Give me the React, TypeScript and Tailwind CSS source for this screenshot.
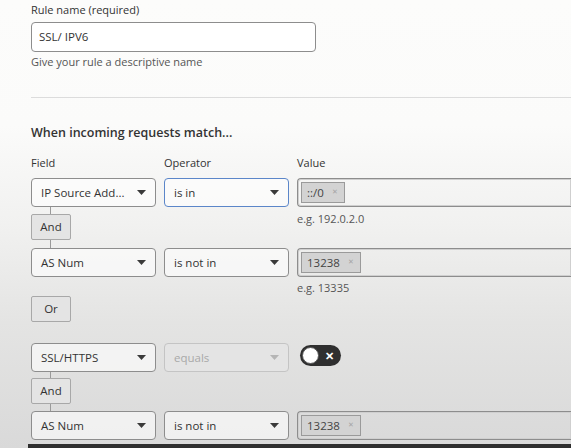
import React from "react";

const font = { fontFamily: '"Open Sans", "Noto Sans", Arial, sans-serif' };

function Caret({ muted }: { muted?: boolean }) {
  return (
    <svg width="9" height="5" viewBox="0 0 9 5" className="shrink-0">
      <path d="M0 0h9L4.5 5z" fill={muted ? "#b5b5b5" : "#3a3a3a"} />
    </svg>
  );
}

function Select({ label, focused, disabled }: { label: string; focused?: boolean; disabled?: boolean }) {
  const border = focused ? "border-[#5b86c9]" : disabled ? "border-[#c4c4c4]" : "border-[#8d8d8d]";
  const bg = disabled ? "bg-[#e4e4e4]" : "bg-white/60";
  const text = disabled ? "text-[#a9a9a9]" : "text-[#333]";
  return (
    <div className={`flex h-[29px] items-center justify-between rounded-[4px] border pl-[9px] pr-[9px] text-[11.5px] ${border} ${bg} ${text}`}>
      <span>{label}</span>
      <Caret muted={disabled} />
    </div>
  );
}

function Tag({ label }: { label: string }) {
  return (
    <span className="flex h-[21px] items-center gap-[8px] border border-[#9a9a9a] bg-[#d3d3d3] pl-[5px] pr-[6px] text-[11.5px] text-[#444]">
      {label}
      <span className="text-[7px] text-[#a5a5a5]">✕</span>
    </span>
  );
}

function Value({ tag }: { tag: string }) {
  return (
    <div className="flex h-[29px] items-center rounded-l-[4px] border border-r-0 border-[#8d8d8d] pl-[3px] shadow-[inset_0_0_0_1px_#cfcfcf]">
      <Tag label={tag} />
    </div>
  );
}

function Joiner({ label }: { label: string }) {
  return (
    <div className="flex h-[26px] w-[40px] items-center justify-center rounded-[2px] border border-[#a8a8a8] bg-[#e4e4e4] text-[11.5px] text-[#333]">
      {label}
    </div>
  );
}

function Link({ h }: { h: string }) {
  return <div className={`ml-[19px] w-px bg-[#9a9a9a] ${h}`} />;
}

function Toggle() {
  return (
    <div className="ml-[3px] mt-[2px] flex h-[21px] w-[41px] items-center justify-between rounded-full bg-[#2f2f2f] px-[2px]">
      <span className="h-[17px] w-[17px] rounded-full border border-[#555] bg-white" />
      <span className="pr-[5px] text-[11px] leading-none font-bold text-white">✕</span>
    </div>
  );
}

const grid = "grid grid-cols-[125px_125px_1fr] gap-x-[8px]";

export default function App() {
  return (
    <div
      style={font}
      className="relative flex h-[448px] w-[571px] flex-col overflow-hidden bg-[linear-gradient(180deg,#fcfcfb_0%,#fbfbfa_28%,#f1f1f0_50%,#e4e4e3_72%,#d9d9d9_100%)]"
    >
      <div className="flex flex-1 flex-col pl-[31px] pt-[2px]">
        <p className="text-[11px] leading-[16px] text-[#333]">Rule name (required)</p>
        <div className="mt-[4px] flex h-[30px] w-[285px] items-center rounded-[4px] border border-[#8d8d8d] bg-white px-[7px] text-[11.5px] text-[#333]">
          SSL/ IPV6
        </div>
        <p className="mt-[3px] text-[11px] leading-[14px] text-[#555]">Give your rule a descriptive name</p>
        <div className="mt-[28px] border-t border-[#dcdcdc]" />
        <h2 className="mt-[26px] text-[12.5px] leading-[18px] font-semibold text-[#333]">When incoming requests match...</h2>

        <div className={`${grid} mt-[14px] text-[11px] leading-[14px] text-[#333]`}>
          <span>Field</span>
          <span>Operator</span>
          <span>Value</span>
        </div>

        <div className={`${grid} mt-[8px]`}>
          <Select label="IP Source Add..." />
          <Select label="is in" focused />
          <Value tag="::/0" />
          <div>
            <Link h="h-[7px]" />
            <Joiner label="And" />
            <Link h="h-[8px]" />
          </div>
          <div />
          <p className="pt-[5px] text-[11px] leading-[14px] text-[#555]">e.g. 192.0.2.0</p>
          <Select label="AS Num" />
          <Select label="is not in" />
          <Value tag="13238" />
          <div />
          <div />
          <p className="pt-[4px] text-[11px] leading-[14px] text-[#555]">e.g. 13335</p>
        </div>

        <div className="mt-[1px]">
          <Joiner label="Or" />
        </div>

        <div className={`${grid} mt-[21px]`}>
          <Select label="SSL/HTTPS" />
          <Select label="equals" disabled />
          <Toggle />
          <div>
            <Link h="h-[6px]" />
            <Joiner label="And" />
            <Link h="h-[7px]" />
          </div>
          <div />
          <div />
          <Select label="AS Num" />
          <Select label="is not in" />
          <Value tag="13238" />
        </div>
      </div>
      <div className="ml-[28px] h-[4px] bg-[#2e2e2e]" />
    </div>
  );
}
